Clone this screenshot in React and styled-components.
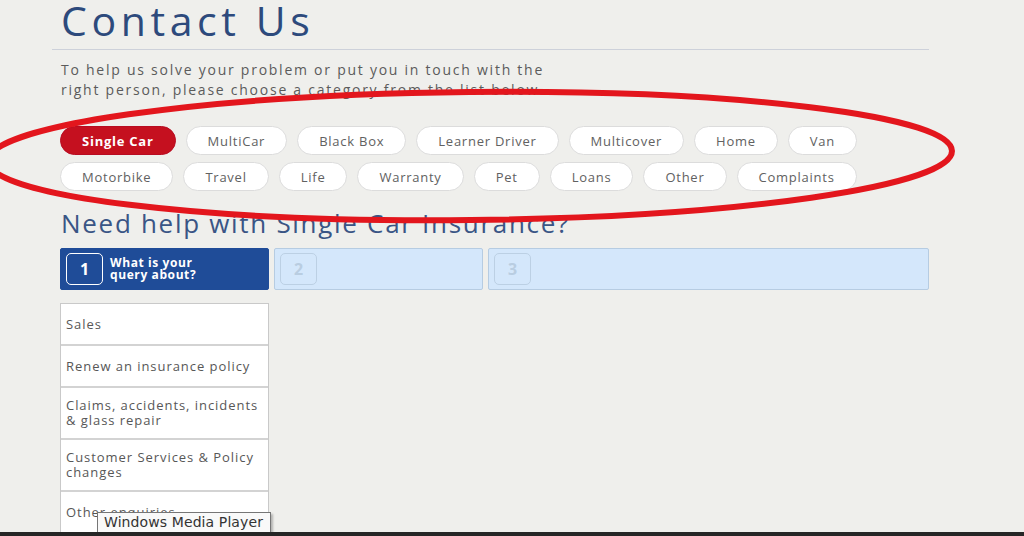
import React from 'react';
import styled, { createGlobalStyle } from 'styled-components';

const GlobalStyle = createGlobalStyle`
  html, body {
    margin: 0;
    padding: 0;
    background: #efefec;
    font-family: "Open Sans", "DejaVu Sans", sans-serif;
    overflow: hidden;
  }
`;

const Page = styled.div`
  position: relative;
  width: 1024px;
  height: 536px;
  overflow: hidden;
  background: #efefec;
`;

const Wrap = styled.div`
  width: 869px;
  margin-left: 60px;
`;

const Title = styled.h1`
  margin: 0;
  font-size: 41px;
  line-height: 40px;
  font-weight: 400;
  letter-spacing: 4.6px;
  color: #2d4a7c;
  padding-left: 1px;
`;

const Divider = styled.div`
  height: 1px;
  background: #cdd1da;
  margin: 9px 0 0 -8px;
`;

const Intro = styled.p`
  margin: 10px 0 0 1px;
  width: 520px;
  font-size: 14px;
  line-height: 20px;
  letter-spacing: 1.75px;
  color: #5b5b5b;
`;

const Pills = styled.div`
  margin-top: 26px;
  display: flex;
  flex-direction: column;
  gap: 7px;
`;

const PillRow = styled.div`
  display: flex;
  gap: 10px;
`;

const Pill = styled.div`
  height: 29px;
  box-sizing: border-box;
  padding: 0 21px;
  border-radius: 15px;
  display: flex;
  align-items: center;
  font-size: 13px;
  letter-spacing: 0.75px;
  white-space: nowrap;
  border: 1px solid ${p => (p.$active ? '#b80c22' : '#dcdcdc')};
  background: ${p => (p.$active ? '#c5101f' : '#ffffff')};
  color: ${p => (p.$active ? '#ffffff' : '#616161')};
  font-weight: ${p => (p.$active ? 700 : 400)};
`;

const Heading = styled.h2`
  margin: 17px 0 0 1px;
  font-size: 26px;
  line-height: 30px;
  font-weight: 400;
  letter-spacing: 1.7px;
  color: #3a5585;
`;

const Steps = styled.div`
  margin-top: 10px;
  display: flex;
  gap: 5px;
  height: 42px;
`;

const Step = styled.div`
  box-sizing: border-box;
  width: ${p => (p.$grow ? 'auto' : '209px')};
  flex: ${p => (p.$grow ? 1 : 'none')};
  display: flex;
  align-items: center;
  gap: 7px;
  padding-left: 5px;
  border-radius: 2px;
  background: ${p => (p.$active ? '#1f4c98' : '#d4e7fb')};
  border: 1px solid ${p => (p.$active ? '#1f4c98' : '#b6cce2')};
`;

const StepNum = styled.div`
  width: 37px;
  height: 32px;
  box-sizing: border-box;
  border-radius: 5px;
  display: flex;
  align-items: center;
  justify-content: center;
  font-size: 16px;
  font-weight: 700;
  border: 1.5px solid ${p => (p.$active ? '#ffffff' : '#bcd0e4')};
  color: ${p => (p.$active ? '#ffffff' : '#b9cde1')};
`;

const StepLabel = styled.div`
  font-size: 12px;
  line-height: 12px;
  font-weight: 700;
  letter-spacing: 0.6px;
  color: #ffffff;
`;

const List = styled.div`
  margin-top: 13px;
  width: 209px;
  box-sizing: border-box;
  border: 1px solid #c9c9c9;
  border-bottom: none;
  background: #ffffff;
`;

const Item = styled.div`
  box-sizing: border-box;
  min-height: 42px;
  padding: 10px 5px;
  display: flex;
  align-items: center;
  border-bottom: 2px solid #d3d3d3;
  font-size: 13px;
  line-height: 15px;
  letter-spacing: 0.95px;
  color: #575757;
`;

const Tooltip = styled.div`
  position: absolute;
  left: 97px;
  top: 512px;
  width: 174px;
  box-sizing: border-box;
  padding: 1px 6px 2px;
  background: #f9f9f9;
  border: 1px solid #767676;
  box-shadow: 2px 2px 2px rgba(0, 0, 0, 0.25);
  font-family: "DejaVu Sans", sans-serif;
  font-size: 14px;
  line-height: 17px;
  color: #333333;
  letter-spacing: 0.1px;
  white-space: nowrap;
`;

const Taskbar = styled.div`
  position: absolute;
  left: 0;
  right: 0;
  bottom: 0;
  height: 4px;
  background: #262626;
`;

const Annotation = styled.svg`
  position: absolute;
  left: 0;
  top: 0;
  pointer-events: none;
`;

const rowOne = ['Single Car', 'MultiCar', 'Black Box', 'Learner Driver', 'Multicover', 'Home', 'Van'];
const rowTwo = ['Motorbike', 'Travel', 'Life', 'Warranty', 'Pet', 'Loans', 'Other', 'Complaints'];

const queries = [
  'Sales',
  'Renew an insurance policy',
  'Claims, accidents, incidents & glass repair',
  'Customer Services & Policy changes',
  'Other enquiries',
];

export default function App() {
  return (
    <Page>
      <GlobalStyle />
      <Wrap>
        <Title>Contact Us</Title>
        <Divider />
        <Intro>
          To help us solve your problem or put you in touch with the right person, please choose a
          category from the list below.
        </Intro>

        <Pills>
          <PillRow>
            {rowOne.map(name => (
              <Pill key={name} $active={name === 'Single Car'}>{name}</Pill>
            ))}
          </PillRow>
          <PillRow>
            {rowTwo.map(name => (
              <Pill key={name}>{name}</Pill>
            ))}
          </PillRow>
        </Pills>

        <Heading>Need help with Single Car Insurance?</Heading>

        <Steps>
          <Step $active>
            <StepNum $active>1</StepNum>
            <StepLabel>What is your<br />query about?</StepLabel>
          </Step>
          <Step>
            <StepNum>2</StepNum>
          </Step>
          <Step $grow>
            <StepNum>3</StepNum>
          </Step>
        </Steps>

        <List>
          {queries.map(q => (
            <Item key={q}>{q}</Item>
          ))}
        </List>
      </Wrap>

      {/* hand drawn red ring round the category pills */}
      <Annotation width="1024" height="536" viewBox="0 0 1024 536">
        <ellipse cx="470" cy="156" rx="482" ry="64" fill="none" stroke="#e3161d" strokeWidth="6" transform="rotate(-0.6 470 156)" />
      </Annotation>

      <Tooltip>Windows Media Player</Tooltip>
      <Taskbar />
    </Page>
  );
}
